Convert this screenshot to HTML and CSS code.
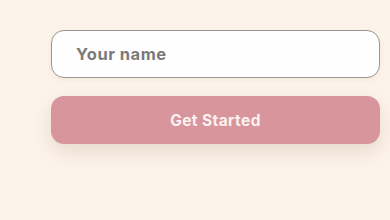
FILE: index.html
```html
<!DOCTYPE html>
<html lang="en">

<head>
    <meta charset="UTF-8">
    <meta name="viewport" content="width=device-width, initial-scale=1.0">
    <title>Welcome</title>
    <link rel="stylesheet" href="styles.css">
</head>

<body>
    <!-- Name form -->
    <form class="start-form">
        <input class="name-input" type="text" placeholder="Your name">
        <button class="start-btn" type="button">Get Started</button>
    </form>
</body>

</html>
```

FILE: styles.css
```css
/* Basic Reset */
* {
    margin: 0;
    padding: 0;
    box-sizing: border-box;
}

body {
    font-family: Inter, "Open Sans", sans-serif;
    background-color: #fcf3ea;
    height: 220px;
    overflow: hidden;
}

/* Form */
.start-form {
    display: flex;
    flex-direction: column;
    gap: 18px;
    width: 329px;
    margin-left: 51px;
    padding-top: 30px;
}

.name-input {
    height: 48px;
    border: 1px solid #9c958f;
    border-radius: 13px;
    background-color: #fefefe;
    padding: 0 24px;
    font-family: inherit;
    font-size: 16.5px;
    font-weight: 700;
    letter-spacing: 0.5px;
    color: #555;
    box-shadow: 0 2px 6px rgba(150, 120, 100, 0.08);
    outline: none;
}

.name-input::placeholder {
    color: #7b7a78;
}

.start-btn {
    height: 48px;
    border: none;
    border-radius: 13px;
    background-color: #d8959b;
    color: #fbf1ef;
    font-family: inherit;
    font-size: 15.5px;
    font-weight: 700;
    letter-spacing: 0.4px;
    cursor: pointer;
    box-shadow: 0 8px 18px rgba(170, 130, 110, 0.22);
}

.start-btn:hover {
    background-color: #d0868d;
}
```
